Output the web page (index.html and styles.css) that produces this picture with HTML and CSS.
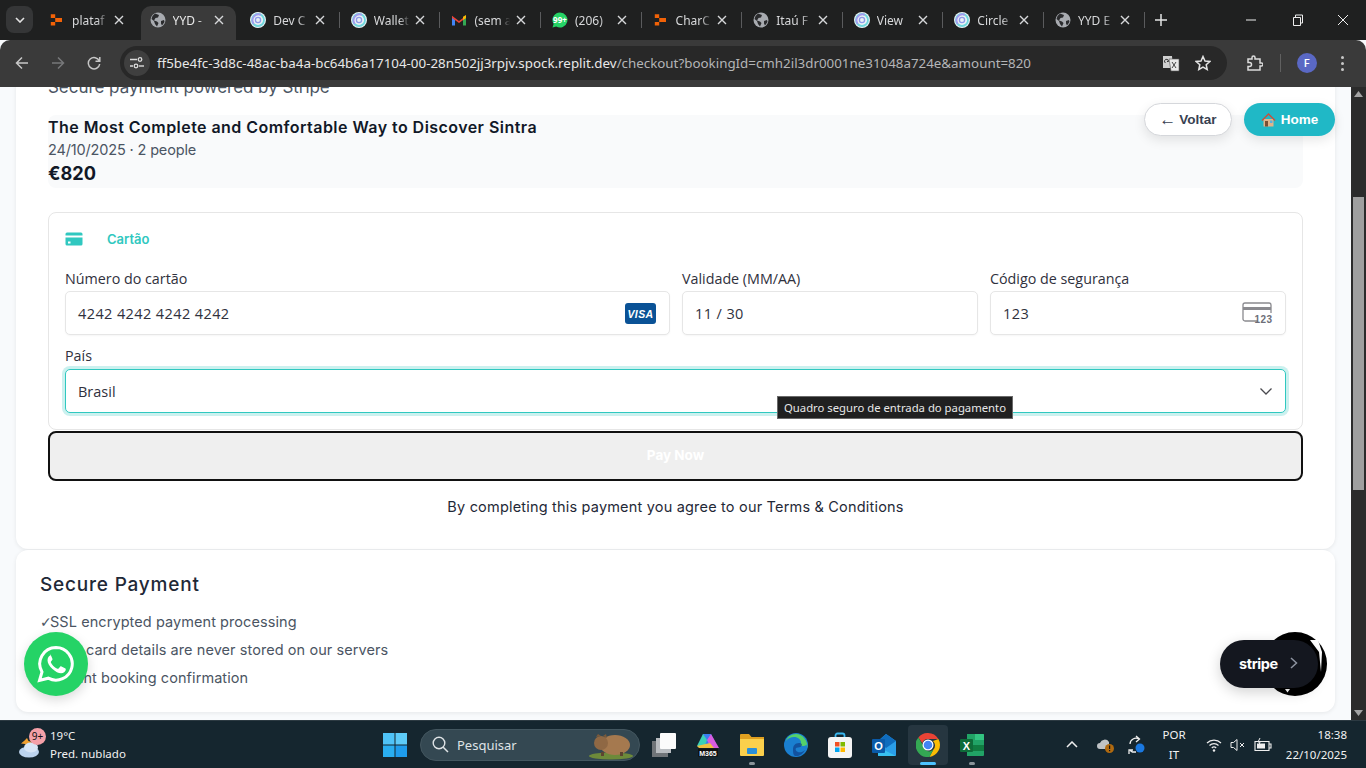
FILE: index.html
```html
<!DOCTYPE html>
<html lang="pt">
<head>
  <meta charset="UTF-8">
  <title>Checkout</title>
  <link rel="stylesheet" href="styles.css">
</head>
<body>
  <svg class="defs" width="0" height="0">
    <symbol id="fav-globe" viewBox="0 0 16 16">
      <circle cx="8" cy="8" r="7.5" fill="#a8abb0"/>
      <path d="M5 1.500 9 3 8 5.500 5.500 6 4 8.500l3 1 1.500 1.500L7 14.500 5 12 4 9 1.500 7 2.500 4zM11 9l3-1 .5 2-2.500 3.500-1-2z" fill="#2a2b2d"/>
    </symbol>
    <symbol id="fav-replit" viewBox="0 0 16 16">
      <path d="M1 1h5.500v4.500H1zM6.500 5.500H15v5H6.500zM1 10.500h5.500V15H1z" fill="#f26207" transform="translate(1 1.500) scale(.8)"/>
    </symbol>
    <symbol id="fav-circle" viewBox="0 0 16 16">
      <circle cx="8" cy="8" r="8" fill="#e9f1f6"/>
      <circle cx="8" cy="8" r="6" fill="none" stroke="#6fd8dc" stroke-width="1.800"/>
      <path d="M3.800 12a6 6 0 0 1 7-9.200" fill="none" stroke="#a49af0" stroke-width="1.800"/>
      <circle cx="8" cy="8" r="2.600" fill="none" stroke="#8f9be8" stroke-width="1.300"/>
    </symbol>
    <symbol id="fav-gmail" viewBox="0 0 16 16">
      <path d="M1 4.500V13.500h3V7.500z" fill="#4285f4"/>
      <path d="M15 4.500V13.500h-3V7.500z" fill="#34a853"/>
      <path d="M1 3.800 8 9l7-5.200V6L8 11 1 6z" fill="#ea4335"/>
      <path d="M12 4.800 15 3v3l-3 2z" fill="#fbbc04"/>
    </symbol>
    <symbol id="fav-whatsapp" viewBox="0 0 16 16">
      <path d="M8 .5a7.500 7.500 0 0 0-6.400 11.400L.5 15.500l3.700-1A7.500 7.500 0 1 0 8 .5z" fill="#25d366"/>
    </symbol>
    <symbol id="tab-x" viewBox="0 0 10 10">
      <path d="M1 1l8 8M9 1 1 9" stroke="#d7d8da" stroke-width="1.400" fill="none"/>
    </symbol>
  </svg>

  <div class="tabstrip">
    <div class="tab-search"><svg width="10" height="6" viewBox="0 0 10 6"><path d="M1 1l4 4 4-4" stroke="#e3e3e3" stroke-width="1.600" fill="none"/></svg></div>
    <div class="tabs">
      <div class="tab"><svg class="fav"><use href="#fav-replit"/></svg><span class="tab-name">plataf</span><svg class="tab-close"><use href="#tab-x"/></svg></div>
      <div class="tab active"><svg class="fav"><use href="#fav-globe"/></svg><span class="tab-name">YYD -</span><svg class="tab-close"><use href="#tab-x"/></svg></div>
      <div class="tab"><svg class="fav"><use href="#fav-circle"/></svg><span class="tab-name">Dev C</span><svg class="tab-close"><use href="#tab-x"/></svg></div>
      <div class="tab sep"><svg class="fav"><use href="#fav-circle"/></svg><span class="tab-name">Wallet</span><svg class="tab-close"><use href="#tab-x"/></svg></div>
      <div class="tab sep"><svg class="fav"><use href="#fav-gmail"/></svg><span class="tab-name">(sem a</span><svg class="tab-close"><use href="#tab-x"/></svg></div>
      <div class="tab sep"><svg class="fav"><use href="#fav-whatsapp"/></svg><span class="wa-badge">99+</span><span class="tab-name">(206)</span><svg class="tab-close"><use href="#tab-x"/></svg></div>
      <div class="tab sep"><svg class="fav"><use href="#fav-replit"/></svg><span class="tab-name">CharC</span><svg class="tab-close"><use href="#tab-x"/></svg></div>
      <div class="tab sep"><svg class="fav"><use href="#fav-globe"/></svg><span class="tab-name">Itaú F</span><svg class="tab-close"><use href="#tab-x"/></svg></div>
      <div class="tab sep"><svg class="fav"><use href="#fav-circle"/></svg><span class="tab-name">View</span><svg class="tab-close"><use href="#tab-x"/></svg></div>
      <div class="tab sep"><svg class="fav"><use href="#fav-circle"/></svg><span class="tab-name">Circle</span><svg class="tab-close"><use href="#tab-x"/></svg></div>
      <div class="tab sep"><svg class="fav"><use href="#fav-globe"/></svg><span class="tab-name">YYD E</span><svg class="tab-close"><use href="#tab-x"/></svg></div>
    </div>
    <div class="tab-new sep"><svg width="12" height="12" viewBox="0 0 12 12"><path d="M6 0v12M0 6h12" stroke="#e3e3e3" stroke-width="1.500"/></svg></div>
    <div class="win-controls">
      <svg width="46" height="40" viewBox="0 0 46 40"><path d="M18 20h10" stroke="#eee" stroke-width="1"/></svg>
      <svg width="46" height="40" viewBox="0 0 46 40"><path d="M19.500 17.500h7v8h-7zM21.500 17.500v-2.500h7v8h-2" stroke="#eee" fill="none"/></svg>
      <svg width="46" height="40" viewBox="0 0 46 40"><path d="M18 15l10 10M28 15 18 25" stroke="#eee" fill="none"/></svg>
    </div>
  </div>

  <div class="toolbar">
    <div class="nav-btn"><svg width="14" height="14" viewBox="0 0 14 14"><path d="M13 7H1.500M7 1.500 1.500 7 7 12.500" stroke="#c7c7c7" stroke-width="1.500" fill="none"/></svg></div>
    <div class="nav-btn"><svg width="14" height="14" viewBox="0 0 14 14"><path d="M1 7h11.500M7 1.500 12.500 7 7 12.500" stroke="#77787a" stroke-width="1.500" fill="none"/></svg></div>
    <div class="nav-btn"><svg width="14" height="14" viewBox="0 0 14 14"><path d="M12.300 5A5.700 5.700 0 1 0 12.700 8M12.800 1v4.300H8.500" stroke="#c7c7c7" stroke-width="1.500" fill="none"/></svg></div>
    <div class="omnibox">
      <div class="site-controls"><svg width="14" height="12" viewBox="0 0 14 12"><path d="M0 2.500h7M0 9h3" stroke="#dcdcdc" stroke-width="1.400"/><circle cx="10" cy="2.500" r="1.800" fill="none" stroke="#dcdcdc" stroke-width="1.300"/><circle cx="6" cy="9" r="1.800" fill="none" stroke="#dcdcdc" stroke-width="1.300"/><path d="M9 9h5" stroke="#dcdcdc" stroke-width="1.400"/></svg></div>
      <div class="url"><span class="url-host">ff5be4fc-3d8c-48ac-ba4a-bc64b6a17104-00-28n502jj3rpjv.spock.replit.dev</span>/checkout?bookingId=cmh2il3dr0001ne31048a724e&amp;amount=820</div>
      <svg class="omni-icon" width="18" height="18" viewBox="0 0 18 18"><path d="M1 2h9l1 12H1z" fill="#cfcfcf"/><path d="M7 5h10v12H9z" fill="#e8e8e8" stroke="#555" stroke-width=".6"/><path d="M3.500 9a2 2 0 1 1 3-1.500H5" stroke="#333" fill="none"/><path d="M10 8l4 6M14 8l-4 6" stroke="#444"/></svg>
      <svg class="omni-icon star" width="16" height="16" viewBox="0 0 16 16"><path d="M8 1.500l2 4.500 4.800.5-3.600 3.200 1 4.800L8 12l-4.200 2.500 1-4.800L1.200 6.500 6 6z" fill="none" stroke="#e3e3e3" stroke-width="1.500"/></svg>
    </div>
    <svg class="ext" width="16" height="16" viewBox="0 0 16 16"><path d="M1 4h4V2.500a1.500 1.500 0 0 1 3 0V4h5v4h1.500a1.500 1.500 0 0 1 0 3H13v4H1v-3.500h1.500a2 2 0 0 0 0-4H1z" fill="none" stroke="#dcdcdc" stroke-width="1.500"/></svg>
    <div class="tool-sep"></div>
    <div class="avatar">F</div>
    <div class="kebab"><i></i><i></i><i></i></div>
  </div>

  <div class="viewport">
    <main class="page">
      <section class="card card-pay">
        <p class="powered">Secure payment powered by Stripe</p>
        <div class="summary">
          <h2 class="summary-title">The Most Complete and Comfortable Way to Discover Sintra</h2>
          <p class="summary-meta">24/10/2025 · 2 people</p>
          <p class="summary-price">€820</p>
        </div>
        <form class="stripe-box">
          <div class="method">
            <svg width="18" height="14" viewBox="0 0 18 14"><path d="M2 .5h14A1.500 1.500 0 0 1 17.500 2v1.500H.5V2A1.500 1.500 0 0 1 2 .5zM.5 5.500h17V12a1.500 1.500 0 0 1-1.500 1.500H2A1.500 1.500 0 0 1 .5 12z" fill="#30c8c0"/><rect x="3" y="9.500" width="2.500" height="2" fill="#fff"/></svg>
            <span>Cartão</span>
          </div>
          <div class="field-row">
            <label class="field field-number">
              <span class="field-label">Número do cartão</span>
              <span class="input input-num">4242 4242 4242 4242
                <svg class="visa-mark" width="31" height="21" viewBox="0 0 31 21"><rect width="31" height="21" rx="3" fill="#0a5296"/><text x="15.500" y="14.500" class="visa">VISA</text></svg>
              </span>
            </label>
            <label class="field">
              <span class="field-label">Validade (MM/AA)</span>
              <span class="input input-num">11 / 30</span>
            </label>
            <label class="field">
              <span class="field-label">Código de segurança</span>
              <span class="input input-num">123
                <svg width="31" height="22" viewBox="0 0 31 22"><path d="M16 19H3a2 2 0 0 1-2-2V3a2 2 0 0 1 2-2h24a2 2 0 0 1 2 2v8" fill="none" stroke="#8a8a8f" stroke-width="1.300"/><path d="M1 5h28v3H1z" fill="#8a8a8f"/><text x="30.500" y="21" class="cvc">123</text></svg>
              </span>
            </label>
          </div>
          <label class="field">
            <span class="field-label field-label-country">País</span>
            <span class="input input-focus">Brasil
              <svg class="select-arrow" width="12" height="7" viewBox="0 0 12 7"><path d="M.5.5 6 6 11.500.5" stroke="#4a4a4f" stroke-width="1.300" fill="none"/></svg>
            </span>
          </label>
        </form>
        <button class="pay-btn" type="button">Pay Now</button>
        <p class="terms">By completing this payment you agree to our Terms &amp; Conditions</p>
      </section>
      <section class="card card-secure">
        <h3 class="secure-title">Secure Payment</h3>
        <ul class="secure-list">
          <li><span class="check">✓</span>SSL encrypted payment processing</li>
          <li><span class="check">✓</span>Your card details are never stored on our servers</li>
          <li><span class="check">✓</span>Instant booking confirmation</li>
        </ul>
      </section>
    </main>

    <div class="scrollbar">
      <svg width="15" height="17" viewBox="0 0 15 17"><path d="M7.500 4 12 10H3z" fill="#a3a3a3"/></svg>
      <div class="scroll-track"><div class="scroll-thumb"></div></div>
      <svg width="15" height="17" viewBox="0 0 15 17"><path d="M3 7h9l-4.500 6z" fill="#a3a3a3"/></svg>
    </div>

    <div class="top-actions">
      <a class="btn-back"><span class="arrow">←</span> Voltar</a>
      <a class="btn-home">
        <svg width="15" height="15" viewBox="0 0 15 15"><path d="M2.500 7h10v7.500h-10z" fill="#e0b48a"/><path d="M7.500 1 .5 8l1 1 6-6 6 6 1-1z" fill="#c9503c"/><rect x="4" y="9" width="3" height="5.500" fill="#7a5034"/><rect x="9" y="8.500" width="2.500" height="2.500" fill="#5ab0e0"/></svg>
        Home
      </a>
    </div>

    <div class="tooltip">Quadro seguro de entrada do pagamento</div>

    <div class="whatsapp">
      <svg width="38" height="38" viewBox="0 0 38 38"><path d="M19 2.500A16.300 16.300 0 0 0 5 27L2.500 35.500l8.800-2.300A16.300 16.300 0 1 0 19 2.500z" fill="none" stroke="#fff" stroke-width="3"/><path d="M13.500 10.500c-1 0-3 2-3 4.800 0 3 2 6 5 8.800s6 4.200 8.500 4.200c2.800 0 4.800-2 4.800-3.800 0-.8-.2-1-.8-1.300l-3.500-1.800c-.6-.3-1-.2-1.400.3l-1.500 1.800c-.4.400-.7.400-1.300.2-1.500-.7-3-1.800-4.200-3-1-1.100-1.800-2.300-2.200-3.300-.2-.5 0-.8.300-1.100l1-1.300c.4-.4.400-.7.200-1.200l-1.500-3.500c-.3-.7-.6-.8-1.100-.8z" fill="#fff"/></svg>
    </div>

    <svg class="stripe-blob" width="64" height="64" viewBox="0 0 64 64">
      <circle cx="32" cy="32" r="32" fill="#000"/>
      <path d="M47 8h8l4 12-1 20-2-20z" fill="#fff"/>
      <path d="M22 57h5l-2.500 3.500z" fill="#fff"/>
    </svg>
    <div class="stripe-badge">
      <span>stripe</span>
      <svg width="8" height="12" viewBox="0 0 8 12"><path d="M1 1l5.500 5L1 11" stroke="#8d93a0" stroke-width="1.500" fill="none"/></svg>
    </div>
  </div>

  <footer class="taskbar">
    <div class="weather">
      <div class="weather-icon">
        <svg width="28" height="28" viewBox="0 0 28 28"><path d="M10 7l1.500 3L15 11l-3 2-1 3-3-3-4-.5 3-2.500z" fill="#f0a030"/><ellipse cx="12" cy="21" rx="10" ry="5.500" fill="#bcd4ee"/><ellipse cx="14" cy="16.500" rx="7" ry="5" fill="#d8e6f6"/></svg>
        <span class="weather-badge">9+</span>
      </div>
      <div class="weather-text"><span>19°C</span><span>Pred. nublado</span></div>
    </div>
    <div class="task-cell">
      <svg width="24" height="24" viewBox="0 0 24 24"><path d="M0 0h11.500v11.500H0z" fill="#4fc3f7"/><path d="M12.500 0H24v11.500H12.500z" fill="#5dcbf8"/><path d="M0 12.500h11.500V24H0z" fill="#29aef0"/><path d="M12.500 12.500H24V24H12.500z" fill="#1e9cec"/></svg>
    </div>
    <div class="search-pill">
      <svg width="17" height="17" viewBox="0 0 17 17"><circle cx="7" cy="7" r="5.800" fill="none" stroke="#dfe3e6" stroke-width="1.400"/><path d="M11.200 11.200 16 16" stroke="#dfe3e6" stroke-width="1.500"/></svg>
      <span class="search-label">Pesquisar</span>
      <svg width="46" height="30" viewBox="0 0 46 30"><ellipse cx="23" cy="26" rx="22" ry="3.500" fill="#6d8a3a"/><ellipse cx="27" cy="15" rx="15" ry="10" fill="#a5794f"/><circle cx="13" cy="13" r="7" fill="#8f6844"/><path d="M8 7l2-3 3 2zM15 6l3-2 1 4z" fill="#7c5a3a"/><path d="M13 22h3v4h-3zM32 22h3v4h-3z" fill="#5d4430"/></svg>
    </div>
    <div class="task-cell">
      <svg width="26" height="26" viewBox="0 0 26 26"><rect x="1" y="9" width="16" height="16" fill="#6f7478"/><rect x="5" y="6" width="15" height="15" fill="#b8bcc0"/><rect x="9" y="1" width="16" height="16" rx="1" fill="#fbfbfb"/></svg>
    </div>
    <div class="task-cell">
      <svg width="24" height="24" viewBox="0 0 24 24"><path d="M7 1h8l5 10-6 3H4z" fill="#3a7df0"/><path d="M1 13 7 1l4 6-3 8z" fill="#3ad0b8"/><path d="M15 1l8 14h-8L11 7z" fill="#d85ce0"/><path d="M1 13l13-3 4 5H3z" fill="#f0c040"/><rect x="2" y="15.500" width="20" height="8" fill="#111"/><text x="12" y="22.500" class="m365">M365</text></svg>
    </div>
    <div class="task-cell dot">
      <svg width="24" height="24" viewBox="0 0 24 24"><path d="M0 2a1 1 0 0 1 1-1h8l2.500 3H24v4H0z" fill="#e0a020"/><path d="M0 6h24v16a1 1 0 0 1-1 1H1a1 1 0 0 1-1-1z" fill="#fbd04c"/><rect x="7" y="15" width="10" height="6" rx="1" fill="#2a8fd8"/></svg>
    </div>
    <div class="task-cell">
      <svg width="24" height="24" viewBox="0 0 24 24"><circle cx="12" cy="12" r="12" fill="#1a7fd0"/><path d="M23.500 15.500C24 8 19 1 12 1 7 1 3 4 2 8c2-3 5-4 8-4 4 0 7 2.500 7 5.500 0 1-.5 2-1.500 2.500 2 1.500 5.500 1.500 7-.5z" fill="#54d06a"/><path d="M9 16c0-3 2-6 6-6 1.500 0 2.500.5 3 1.500 0 2-2 3-4 3-2 0-3 1-2 3 1 1.500 5 3.500 9-.5-2 4-6 6.500-10 6-2-1-2-4-2-7z" fill="#0f3f8a" opacity=".7"/></svg>
    </div>
    <div class="task-cell">
      <svg width="24" height="26" viewBox="0 0 24 26"><path d="M7.500 7V3.500a2 2 0 0 1 2-2h5a2 2 0 0 1 2 2V7" fill="none" stroke="#39b7f0" stroke-width="1.800"/><rect y="5" width="24" height="21" rx="3" fill="#f4f4f4"/><rect x="7" y="10" width="4.500" height="4.500" fill="#f25022"/><rect x="12.500" y="10" width="4.500" height="4.500" fill="#7fba00"/><rect x="7" y="15.500" width="4.500" height="4.500" fill="#00a4ef"/><rect x="12.500" y="15.500" width="4.500" height="4.500" fill="#ffb900"/></svg>
    </div>
    <div class="task-cell">
      <svg width="24" height="24" viewBox="0 0 24 24"><path d="M14 1 24 8v14a1 1 0 0 1-1 1H6V8z" fill="#2a9ee8"/><path d="M14 1 24 8l-10 7L6 8z" fill="#0f6cbd"/><path d="M6 14l18 9H7a1 1 0 0 1-1-1z" fill="#38c0f0"/><rect y="6" width="13" height="14" rx="1" fill="#0a5aa8"/><text x="6.500" y="17" class="office">O</text></svg>
    </div>
    <div class="task-cell active">
      <svg width="24" height="24" viewBox="0 0 24 24"><path d="M12 0a12 12 0 0 1 10.400 6H12a6 6 0 0 0-5.700 4.200L2.400 4.400A12 12 0 0 1 12 0z" fill="#ea4335"/><path d="M22.400 6a12 12 0 0 1-9 17.900l4-7.300A6 6 0 0 0 17 8z" fill="#fbbc04"/><path d="M13.400 23.900A12 12 0 0 1 2.400 4.400l4.800 8.400A6 6 0 0 0 17.400 16.600z" fill="#34a853"/><circle cx="12" cy="12" r="5.500" fill="#fff"/><circle cx="12" cy="12" r="4.300" fill="#4285f4"/></svg>
    </div>
    <div class="task-cell dot">
      <svg width="24" height="24" viewBox="0 0 24 24"><path d="M7 1h16a1 1 0 0 1 1 1v20a1 1 0 0 1-1 1H7z" fill="#21a366"/><path d="M7 12h17v6H7z" fill="#107c41"/><path d="M15 1h8a1 1 0 0 1 1 1v5h-9z" fill="#33c481"/><rect y="6" width="13" height="13" rx="1" fill="#0e6b39"/><text x="6.500" y="16.500" class="office">X</text></svg>
    </div>
    <div class="tray">
      <svg class="tray-chevron" width="12" height="7" viewBox="0 0 12 7"><path d="M1 6l5-5 5 5" stroke="#eee" stroke-width="1.500" fill="none"/></svg>
      <svg class="tray-cloud" width="18" height="18" viewBox="0 0 18 18"><path d="M3 13a3 3 0 0 1 0-6 5 5 0 0 1 9-1v7z" fill="#bfc3c6"/><circle cx="12.500" cy="12.500" r="4.500" fill="#b06a10"/><rect x="12" y="9.500" width="1.200" height="3.500" fill="#111"/><rect x="12" y="14" width="1.200" height="1.200" fill="#111"/></svg>
      <svg class="tray-sync" width="18" height="20" viewBox="0 0 18 20"><path d="M2 9a6 6 0 0 1 9-5M8 1l3.500 3L8 7M8 17H4.500a4 4 0 0 1-2.500-2M1 19v-4h4" stroke="#eee" stroke-width="1.300" fill="none"/><circle cx="12" cy="13" r="4.500" fill="#1a78e0"/></svg>
      <div class="tray-lang"><span>POR</span><span>IT</span></div>
      <svg class="tray-wifi" width="16" height="14" viewBox="0 0 16 14"><path d="M1 5a10 10 0 0 1 14 0M3.500 7.500a6.500 6.500 0 0 1 9 0M5.800 10a3.200 3.200 0 0 1 4.400 0" stroke="#eee" stroke-width="1.200" fill="none"/><circle cx="8" cy="12.500" r="1.200" fill="#eee"/></svg>
      <svg class="tray-vol" width="16" height="14" viewBox="0 0 16 14"><path d="M1 4.500h2.500L7 1.500v11l-3.500-3H1zM10 5l4 4M14 5l-4 4" stroke="#eee" fill="none"/></svg>
      <svg class="tray-batt" width="18" height="14" viewBox="0 0 18 14"><path d="M1 3.500h14v9H1zM15 6h2v4h-2z" stroke="#eee" stroke-width="1.100" fill="none"/><path d="M3 5.500h8v5H3z" fill="#eee"/><path d="M6 0 4 4h2L5 7" stroke="#eee" fill="none"/></svg>
      <div class="clock"><span>18:38</span><span>22/10/2025</span></div>
    </div>
  </footer>
</body>
</html>
```

FILE: styles.css
```css
* {
    box-sizing: border-box;
}
html, body {
    height: 100%;
}
body {
    margin: 0;
    width: 1366px;
    height: 768px;
    display: flex;
    flex-direction: column;
    overflow: hidden;
    font-family: 'Inter', 'Liberation Sans', sans-serif;
    background: #f8fafc;
}
h2, h3, p, ul {
    margin: 0;
    padding: 0;
}
.defs {
    position: absolute;
}

/* browser tabs */
.tabstrip {
    height: 40px;
    flex: none;
    display: flex;
    background: #1f2020;
    color: #d7d8da;
    font-family: 'Noto Sans', sans-serif;
    font-size: 12px;
}
.tab-search {
    width: 27px;
    height: 27px;
    margin: 6px 7px 0 6px;
    border-radius: 8px;
    background: #353637;
    display: flex;
    align-items: center;
    justify-content: center;
}
.tabs {
    display: flex;
    padding-top: 6px;
}
.tab {
    width: 100.600px;
    height: 34px;
    padding: 0 17px 6px 9px;
    display: flex;
    align-items: center;
    position: relative;
}
.tab.active {
    width: 95px;
    margin-right: 5.600px;
    padding-right: 11.400px;
    background: #3a3a3a;
    border-radius: 10px 10px 0 0;
    color: #e8e8e8;
}
.sep::before {
    content: "";
    position: absolute;
    left: -3px;
    top: 6px;
    height: 16px;
    width: 1px;
    background: #5a5b5d;
}
.fav {
    width: 16px;
    height: 16px;
    flex: none;
}
.wa-badge {
    position: absolute;
    left: 9px;
    top: 8px;
    width: 16px;
    text-align: center;
    color: #fff;
    font-size: 8px;
    line-height: 11px;
    font-weight: 700;
}
.tab-name {
    margin-left: 7px;
    width: 36px;
    flex: none;
    white-space: nowrap;
    overflow: hidden;
    -webkit-mask-image: linear-gradient(90deg, #000 70%, transparent);
    mask-image: linear-gradient(90deg, #000 70%, transparent);
}
.tab-close {
    width: 10px;
    height: 10px;
    margin-left: auto;
    flex: none;
}
.tab-new {
    position: relative;
    width: 29px;
    display: flex;
    align-items: center;
    justify-content: center;
}
.tab-new.sep::before {
    top: 12px;
}
.win-controls {
    margin-left: auto;
    display: flex;
}
.win-controls svg {
    display: block;
}

/* toolbar */
.toolbar {
    height: 47px;
    flex: none;
    background: #3a3a3a;
    display: flex;
    align-items: center;
    padding: 0 0 1px 4px;
    border-radius: 10px 10px 0 0;
}
.nav-btn {
    width: 36px;
    height: 34px;
    flex: none;
    display: flex;
    align-items: center;
    justify-content: center;
}
.omnibox {
    margin-left: 8px;
    width: 1107px;
    height: 34px;
    flex: none;
    border-radius: 17px;
    background: #282828;
    display: flex;
    align-items: center;
    padding: 0 16px 0 4px;
    font-family: 'Noto Sans', sans-serif;
    font-size: 13.350px;
    color: #b4b5b7;
}
.site-controls {
    width: 26px;
    height: 26px;
    flex: none;
    border-radius: 50%;
    background: #3f3f3f;
    display: flex;
    align-items: center;
    justify-content: center;
}
.url {
    margin-left: 7px;
    white-space: nowrap;
}
.url-host {
    color: #e8e8e8;
}
.omni-icon {
    margin-left: auto;
    flex: none;
}
.omni-icon.star {
    margin-left: 15px;
}
.ext {
    margin-left: 20px;
    flex: none;
}
.tool-sep {
    margin-left: 17px;
    width: 1px;
    height: 18px;
    background: #606060;
}
.avatar {
    margin-left: 16px;
    width: 20px;
    height: 20px;
    flex: none;
    border-radius: 50%;
    background: #5a68c4;
    color: #fff;
    font-size: 10px;
    font-weight: 600;
    display: flex;
    align-items: center;
    justify-content: center;
}
.kebab {
    margin-left: 24px;
    display: flex;
    flex-direction: column;
    gap: 3px;
}
.kebab i {
    width: 3px;
    height: 3px;
    border-radius: 50%;
    background: #c7c7c7;
}

/* page */
.viewport {
    flex: 1;
    min-height: 0;
    position: relative;
    display: flex;
    overflow: hidden;
}
.page {
    width: 1351px;
    flex: none;
    padding: 0 16px;
    color: #1a1a1a;
}
.card {
    background: #fff;
    border-radius: 12px;
    box-shadow: 0 1px 4px rgba(0, 0, 0, .08);
}
.card-pay {
    height: 475px;
    margin-top: -13px;
    padding: 0 32px;
}
.powered {
    font-size: 17px;
    line-height: 26px;
    height: 28px;
    color: #4b5563;
    letter-spacing: -.04px;
}
.summary {
    margin-top: 13px;
    height: 73px;
    border-radius: 8px;
    background: #f9fafb;
    display: flex;
    flex-direction: column;
}
.summary-title {
    font-size: 16px;
    line-height: 24px;
    font-weight: 600;
    letter-spacing: .45px;
    color: #111827;
}
.summary-meta {
    font-size: 14.500px;
    line-height: 22px;
    color: #4b5563;
    letter-spacing: -.15px;
}
.summary-price {
    font-size: 18.200px;
    line-height: 25px;
    font-weight: 700;
    color: #111827;
}
.stripe-box {
    margin-top: 24px;
    height: 218px;
    border: 1px solid #e6e6e6;
    border-radius: 8px;
    padding: 14px 16px 0;
    font-family: 'Open Sans', sans-serif;
    color: #30313d;
}
.method {
    height: 24px;
    display: flex;
    align-items: center;
    gap: 24px;
    font-family: 'Inter', sans-serif;
    font-size: 13px;
    font-weight: 600;
    color: #30c8c0;
}
.field-row {
    margin-top: 18px;
    display: grid;
    grid-template-columns: 605px 296px 296px;
    column-gap: 12px;
}
.field {
    display: block;
    margin-bottom: 11px;
}
.field-label {
    display: block;
    font-size: 14.300px;
    line-height: 20px;
    margin-bottom: 2px;
}
.field-label-country {
    margin-bottom: 3px;
}
.input {
    height: 44px;
    padding: 0 12px;
    background: #fff;
    border: 1px solid #e6e6e6;
    border-radius: 5px;
    box-shadow: 0 1px 2px rgba(0, 0, 0, .04);
    display: flex;
    align-items: center;
    justify-content: space-between;
    font-size: 14.500px;
}
.input-num {
    letter-spacing: .4px;
}
.input-focus {
    border-color: #30c8c0;
    box-shadow: 0 0 0 3px rgba(48, 200, 192, .25);
}
.visa-mark {
    margin-right: 1px;
}
.select-arrow {
    margin-right: 1px;
}
.visa {
    font-family: 'Liberation Sans', sans-serif;
    font-size: 10.500px;
    font-weight: 700;
    font-style: italic;
    fill: #fff;
    text-anchor: middle;
}
.cvc {
    font-family: 'Liberation Sans', sans-serif;
    font-size: 10px;
    font-weight: 700;
    fill: #6d6e78;
    text-anchor: end;
}
.pay-btn {
    display: block;
    width: 100%;
    height: 50px;
    margin-top: 1px;
    padding: 0 0 3px;
    border: 2px solid #111;
    border-radius: 8px;
    background: #efefef;
    color: #fff;
    font-family: 'Inter', sans-serif;
    font-size: 13.500px;
    font-weight: 700;
}
.terms {
    margin-top: 15px;
    text-align: center;
    font-size: 14.500px;
    line-height: 22px;
    color: #1f2937;
    letter-spacing: .19px;
}
.card-secure {
    height: 162px;
    margin-top: 1px;
    padding: 20px 24px 0;
}
.secure-title {
    font-size: 19px;
    line-height: 30px;
    font-weight: 500;
    letter-spacing: .8px;
    color: #1f2937;
}
.secure-list {
    margin-top: 8px;
    list-style: none;
    font-size: 14.500px;
    line-height: 28px;
    color: #4b5563;
    letter-spacing: .07px;
}
.secure-list li {
    height: 28px;
}
.check {
    display: inline-block;
    width: 10px;
    line-height: 0;
    font-family: 'DejaVu Sans', sans-serif;
    font-size: 14px;
    letter-spacing: 0;
    overflow: visible;
}

/* scrollbar */
.scrollbar {
    width: 15px;
    flex: none;
    background: #2b2b2b;
    display: flex;
    flex-direction: column;
}
.scrollbar svg {
    flex: none;
    display: block;
}
.scroll-track {
    flex: 1;
    padding-top: 93px;
}
.scroll-thumb {
    width: 11px;
    height: 293px;
    margin-left: 2px;
    background: #9f9f9f;
}

/* floating things */
.top-actions {
    position: absolute;
    top: 16px;
    right: 31px;
    display: flex;
    gap: 12px;
    font-family: 'Liberation Sans', sans-serif;
    font-size: 13.500px;
    font-weight: 700;
}
.btn-back, .btn-home {
    height: 33px;
    border-radius: 17px;
    display: flex;
    align-items: center;
    justify-content: center;
    box-shadow: 0 4px 12px rgba(0, 0, 0, .1);
}
.btn-back {
    width: 88px;
    gap: 3px;
    background: #fff;
    border: 1px solid #d5d7db;
    color: #374151;
}
.arrow {
    font-size: 17px;
    font-weight: 400;
}
.btn-home {
    width: 91px;
    gap: 5px;
    background: #20b8c6;
    color: #fff;
}
.tooltip {
    position: absolute;
    left: 777px;
    top: 309px;
    width: 236px;
    height: 23px;
    background: #202020;
    border: 1px solid #6a6a6a;
    color: #e8e8e8;
    font-family: 'Noto Sans', sans-serif;
    font-size: 11.300px;
    line-height: 21px;
    text-align: center;
    white-space: nowrap;
}
.whatsapp {
    position: absolute;
    left: 24px;
    top: 545px;
    width: 64px;
    height: 64px;
    border-radius: 50%;
    background: #25d366;
    box-shadow: 0 4px 12px rgba(0, 0, 0, .15);
    display: flex;
    align-items: center;
    justify-content: center;
}
.stripe-blob {
    position: absolute;
    left: 1263px;
    top: 545px;
}
.stripe-badge {
    position: absolute;
    left: 1220px;
    top: 553px;
    width: 98px;
    height: 48px;
    border-radius: 24px;
    background: #14171f;
    box-shadow: 0 4px 14px rgba(0, 0, 0, .18);
    color: #fff;
    font-family: 'Inter', sans-serif;
    font-size: 14.500px;
    font-weight: 700;
    letter-spacing: -.4px;
    display: flex;
    align-items: center;
    padding: 0 0 2px 19px;
    gap: 12px;
}

/* windows taskbar */
.taskbar {
    height: 48px;
    flex: none;
    background: #15262f;
    border-top: 1px solid #2c3a42;
    display: flex;
    align-items: center;
    font-family: 'Noto Sans', sans-serif;
    font-size: 11.500px;
    color: #f2f2f2;
}
.weather {
    width: 373px;
    flex: none;
    display: flex;
    align-items: center;
    padding-left: 17px;
    gap: 5px;
}
.weather-icon {
    position: relative;
    width: 28px;
    height: 28px;
}
.weather-badge {
    position: absolute;
    left: 12px;
    top: -3px;
    width: 17px;
    height: 17px;
    border-radius: 50%;
    background: #f4a0a8;
    color: #111;
    font-size: 10px;
    line-height: 17px;
    text-align: center;
}
.weather-text {
    display: flex;
    flex-direction: column;
    line-height: 18px;
}
.task-cell {
    width: 44px;
    height: 40px;
    flex: none;
    position: relative;
    display: flex;
    align-items: center;
    justify-content: center;
}
.task-cell.dot::after, .task-cell.active::after {
    content: "";
    position: absolute;
    bottom: 0;
    left: 50%;
    width: 6px;
    height: 3px;
    margin-left: -3px;
    border-radius: 2px;
    background: #8a949a;
}
.task-cell.active {
    width: 40px;
    margin: 0 2px;
    border-radius: 4px;
    background: #263640;
}
.task-cell.active::after {
    width: 16px;
    margin-left: -8px;
    background: #4cc2ff;
}
.search-pill {
    width: 220px;
    height: 32px;
    margin: 0 2px 0 3px;
    flex: none;
    border-radius: 16px;
    background: #344852;
    border: 1px solid #43565f;
    display: flex;
    align-items: center;
    padding: 0 5px 0 11px;
    font-size: 13px;
    color: #dfe3e6;
}
.search-label {
    margin-left: 8px;
    margin-right: auto;
}
.m365 {
    font-family: 'Liberation Sans', sans-serif;
    font-size: 7px;
    font-weight: 700;
    fill: #fff;
    text-anchor: middle;
}
.office {
    font-family: 'Liberation Sans', sans-serif;
    font-size: 11px;
    font-weight: 700;
    fill: #fff;
    text-anchor: middle;
}
.tray {
    flex: 1;
    display: flex;
    align-items: center;
    padding-left: 72px;
}
.tray svg {
    flex: none;
}
.tray-cloud {
    margin-left: 19px;
}
.tray-sync {
    margin-left: 13px;
}
.tray-lang {
    margin-left: 13px;
    width: 30px;
    display: flex;
    flex-direction: column;
    align-items: center;
    line-height: 20px;
}
.tray-wifi {
    margin-left: 17px;
}
.tray-vol {
    margin-left: 8px;
}
.tray-batt {
    margin-left: 8px;
}
.clock {
    margin-left: auto;
    padding-right: 19px;
    display: flex;
    flex-direction: column;
    align-items: flex-end;
    line-height: 20px;
}
```
